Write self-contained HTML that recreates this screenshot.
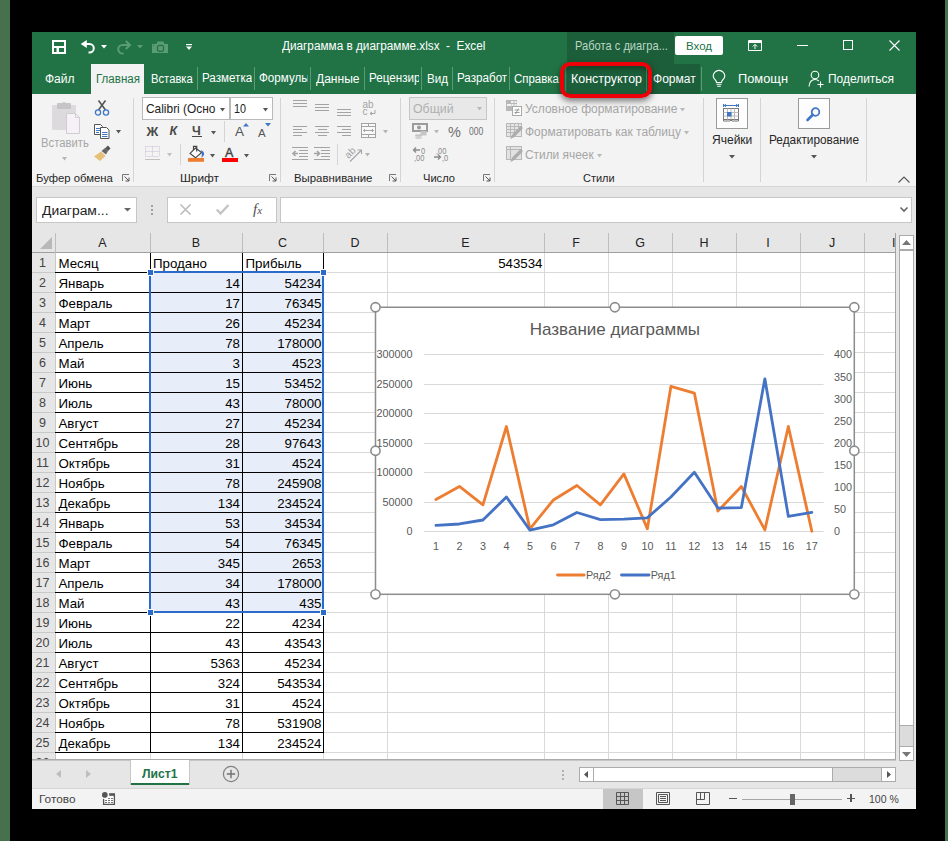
<!DOCTYPE html><html><head><meta charset="utf-8"><style>
html,body{margin:0;padding:0;}
body{width:948px;height:841px;background:#000;position:relative;overflow:hidden;font-family:"Liberation Sans",sans-serif;}
div{position:absolute;box-sizing:border-box;}
.t{white-space:nowrap;line-height:1;}
svg{position:absolute;overflow:visible;}
</style></head><body>
<div style="left:0px;top:0px;width:10px;height:841px;background:#47714d"></div>
<div style="left:945px;top:0px;width:3px;height:841px;background:#47714d"></div>
<div style="left:32px;top:32px;width:884px;height:777px;background:#e6e6e6"></div>
<div style="left:32px;top:32px;width:884px;height:62px;background:#217346"></div>
<svg style="left:52px;top:40px" width="14" height="14" viewBox="0 0 14 14">
<path d="M1 1h12v12H1z" fill="none" stroke="#fff" stroke-width="2"/>
<path d="M1 6h12v2H1z" fill="#fff"/>
<path d="M4.5 8h2.5v4H4.5z" fill="#fff"/>
</svg>
<svg style="left:80px;top:40px" width="16" height="14" viewBox="0 0 16 14">
<path d="M5 4h4.5a4.3 4.3 0 0 1 0 8.6h-1" fill="none" stroke="#fff" stroke-width="2"/>
<path d="M0.7 4L6.8 0v8z" fill="#fff"/>
</svg>
<svg style="left:101px;top:45px" width="6" height="4" viewBox="0 0 6 4"><path d="M0 0h6L3 3.5z" fill="#fff"/></svg>
<svg style="left:116px;top:40px" width="16" height="14" viewBox="0 0 16 14">
<path d="M13.5 5H6.5a4.3 4.3 0 0 0 0 8.6h1" fill="none" stroke="#5b9c76" stroke-width="2"/>
<path d="M9.8 1L14 5L9.8 9" fill="none" stroke="#5b9c76" stroke-width="2"/>
</svg>
<svg style="left:137px;top:45px" width="6" height="4" viewBox="0 0 6 4"><path d="M0 0h6L3 3.5z" fill="#5b9c76"/></svg>
<svg style="left:152px;top:41px" width="16" height="12" viewBox="0 0 16 12">
<path d="M0 3h4.5l1-2.5h6l1 2.5h3.5v9h-16z" fill="#5b9c76"/>
<rect x="5.5" y="4.3" width="6" height="6" rx="2" fill="none" stroke="#217346" stroke-width="1.3"/>
<circle cx="1.5" cy="4.5" r="0.6" fill="#217346"/>
</svg>
<svg style="left:186px;top:44px" width="6" height="7" viewBox="0 0 6 7"><path d="M0 0h6v1.2H0z" fill="#fff"/><path d="M0 2.5h6L3 6z" fill="#fff"/></svg>
<div class="t" style="left:282.40px;top:40.35px;font-size:12.21px;font-weight:normal;transform:scaleX(0.964);transform-origin:0 0;color:#fff">Диаграмма в диаграмме.xlsx&nbsp; -&nbsp; Excel</div>
<div style="left:567px;top:32px;width:107px;height:32px;background:#1b5e39"></div>
<div style="left:567px;top:64px;width:133px;height:30px;background:#1b5e39"></div>
<div class="t" style="left:574.70px;top:41.09px;font-size:11.92px;font-weight:normal;transform:scaleX(0.933);transform-origin:0 0;color:#bcd6c6">Работа с диагра...</div>
<div style="left:675px;top:36px;width:48px;height:19px;background:#fff;border-radius:2px"></div>
<div class="t" style="left:675px;top:41px;width:48px;text-align:center;color:#217346;font-size:11.5px">Вход</div>
<svg style="left:748px;top:40px" width="15" height="11" viewBox="0 0 15 11">
<path d="M0.5 0.5h13v10h-13z" fill="none" stroke="#fff" stroke-width="1"/>
<path d="M1 2h13" stroke="#fff" stroke-width="2"/>
<path d="M7 9V4.5M4.8 6.5L7 4.3L9.2 6.5" fill="none" stroke="#fff" stroke-width="1"/>
</svg>
<div style="left:797px;top:45px;width:11px;height:1px;background:#fff"></div>
<div style="left:843px;top:40px;width:10px;height:10px;border:1px solid #fff"></div>
<svg style="left:889px;top:40px" width="11" height="11" viewBox="0 0 11 11"><path d="M0.5 0.5L10.5 10.5M10.5 0.5L0.5 10.5" stroke="#fff" stroke-width="1.1"/></svg>
<div class="t" style="left:45.00px;top:72.58px;font-size:12.65px;font-weight:normal;transform:scaleX(0.949);transform-origin:0 0;color:#fff">Файл</div>
<div style="left:91px;top:64px;width:53px;height:30px;background:#f3f3f3"></div>
<div class="t" style="left:95.50px;top:72.58px;font-size:12.65px;font-weight:normal;transform:scaleX(0.914);transform-origin:0 0;color:#217346">Главная</div>
<div class="t" style="left:150.60px;top:72.58px;font-size:12.65px;font-weight:normal;transform:scaleX(0.889);transform-origin:0 0;color:#fff">Вставка</div>
<div style="left:197px;top:67px;width:1px;height:23px;background:#5c9a76"></div>
<div style="left:202.3px;top:64px;width:49.7px;height:30px;overflow:hidden"><div class="t" style="left:0;top:8.08px;font-size:12.65px;transform:scaleX(0.92);transform-origin:0 0;color:#fff">Разметка страницы</div></div>
<div style="left:254px;top:67px;width:1px;height:23px;background:#5c9a76"></div>
<div style="left:259.0px;top:64px;width:49.0px;height:30px;overflow:hidden"><div class="t" style="left:0;top:8.08px;font-size:12.65px;transform:scaleX(0.92);transform-origin:0 0;color:#fff">Формулы</div></div>
<div style="left:310px;top:67px;width:1px;height:23px;background:#5c9a76"></div>
<div class="t" style="left:316.00px;top:72.58px;font-size:12.65px;font-weight:normal;transform:scaleX(0.954);transform-origin:0 0;color:#fff">Данные</div>
<div style="left:364px;top:67px;width:1px;height:23px;background:#5c9a76"></div>
<div style="left:369.4px;top:64px;width:49.6px;height:30px;overflow:hidden"><div class="t" style="left:0;top:8.08px;font-size:12.65px;transform:scaleX(0.92);transform-origin:0 0;color:#fff">Рецензирование</div></div>
<div style="left:421px;top:67px;width:1px;height:23px;background:#5c9a76"></div>
<div class="t" style="left:427.00px;top:72.58px;font-size:12.65px;font-weight:normal;transform:scaleX(0.918);transform-origin:0 0;color:#fff">Вид</div>
<div style="left:452px;top:67px;width:1px;height:23px;background:#5c9a76"></div>
<div style="left:457.0px;top:64px;width:50.0px;height:30px;overflow:hidden"><div class="t" style="left:0;top:8.08px;font-size:12.65px;transform:scaleX(0.92);transform-origin:0 0;color:#fff">Разработчик</div></div>
<div style="left:509px;top:67px;width:1px;height:23px;background:#5c9a76"></div>
<div class="t" style="left:514.20px;top:72.58px;font-size:12.65px;font-weight:normal;transform:scaleX(0.907);transform-origin:0 0;color:#fff">Справка</div>
<div class="t" style="left:571.00px;top:72.58px;font-size:12.65px;font-weight:normal;transform:scaleX(0.985);transform-origin:0 0;color:#fff">Конструктор</div>
<div style="left:565px;top:67px;width:1px;height:24px;background:#4d8a66"></div>
<div style="left:646px;top:67px;width:1px;height:24px;background:#4d8a66"></div>
<div class="t" style="left:652.60px;top:72.58px;font-size:12.65px;font-weight:normal;transform:scaleX(0.953);transform-origin:0 0;color:#fff">Формат</div>
<div style="left:701px;top:67px;width:1px;height:24px;background:#5c9a76"></div>
<svg style="left:712px;top:71px" width="14" height="17" viewBox="0 0 14 17">
<path d="M4.5 11.5C4.5 9 1.2 7.8 1.2 5.2A5.8 5.8 0 0 1 12.8 5.2C12.8 7.8 9.5 9 9.5 11.5z" fill="none" stroke="#fff" stroke-width="1.1"/>
<path d="M4.5 13.3h5M5.2 15.2h3.6" stroke="#fff" stroke-width="1.1"/>
</svg>
<div class="t" style="left:738.00px;top:72.58px;font-size:12.65px;font-weight:normal;transform:scaleX(1.016);transform-origin:0 0;color:#fff">Помощн</div>
<svg style="left:808px;top:70px" width="17" height="18" viewBox="0 0 17 18">
<circle cx="7" cy="5" r="3.8" fill="none" stroke="#fff" stroke-width="1.1"/>
<path d="M1 16.5C1.5 12 4 9.5 7 9.5C8.5 9.5 9.8 10 10.8 11" fill="none" stroke="#fff" stroke-width="1.1"/>
<path d="M12.5 11.5v6M9.5 14.5h6" stroke="#fff" stroke-width="1.1"/>
</svg>
<div class="t" style="left:828.00px;top:72.58px;font-size:12.65px;font-weight:normal;transform:scaleX(0.945);transform-origin:0 0;color:#fff">Поделиться</div>
<div style="left:32px;top:94px;width:884px;height:92px;background:#f3f3f3"></div>
<div style="left:91px;top:94px;width:53px;height:1px;background:#f3f3f3"></div>
<div style="left:32px;top:186px;width:884px;height:1px;background:#d6d6d6"></div>
<svg style="left:52px;top:102px" width="29" height="30" viewBox="0 0 29 30">
<rect x="0" y="3" width="24" height="25" rx="1" fill="#dcdadc"/>
<rect x="5" y="1" width="14" height="6" rx="1" fill="#c6c4c6"/>
<circle cx="12" cy="1.8" r="1.8" fill="#c6c4c6"/>
<path d="M14.5 11.5h9l4 4v16h-13z" fill="#f6f1f6" stroke="#cfcdcf" stroke-width="1"/>
<path d="M23.5 11.5v4h4" fill="none" stroke="#cfcdcf" stroke-width="1"/>
</svg>
<div class="t" style="left:40.60px;top:136.80px;font-size:12.50px;font-weight:normal;transform:scaleX(0.902);transform-origin:0 0;color:#a6a6a6">Вставить</div>
<svg style="left:62px;top:157px" width="5" height="4" viewBox="0 0 5 4"><path d="M0 0h5L2.5 3.5z" fill="#b4b4b4"/></svg>
<svg style="left:94px;top:100px" width="16" height="16" viewBox="0 0 16 16">
<path d="M4.5 10L11.5 0.5M11.5 10L4.5 0.5" stroke="#555" stroke-width="1.6"/>
<circle cx="4" cy="12.5" r="2.6" fill="none" stroke="#3f77c6" stroke-width="1.3"/>
<circle cx="12" cy="12.5" r="2.6" fill="none" stroke="#3f77c6" stroke-width="1.3"/>
</svg>
<svg style="left:94px;top:124px" width="16" height="15" viewBox="0 0 16 15">
<path d="M0.5 0.5h6l2 2v8h-8z" fill="#fff" stroke="#555" stroke-width="1"/>
<path d="M2 4.5h4M2 6.5h4M2 8.5h3" stroke="#3f77c6" stroke-width="1"/>
<path d="M6.5 3.5h6l2.5 2.5v8.5h-8.5z" fill="#fff" stroke="#555" stroke-width="1"/>
<path d="M8 8.5h5.5M8 10.5h5.5M8 12.5h5.5" stroke="#3f77c6" stroke-width="1"/>
</svg>
<svg style="left:116px;top:130px" width="5" height="4" viewBox="0 0 5 4"><path d="M0 0h5L2.5 3.5z" fill="#555"/></svg>
<svg style="left:94px;top:146px" width="17" height="15" viewBox="0 0 17 15">
<path d="M0 10.5L7 5.5L11.5 10L6 15z" fill="#e6bf78"/>
<path d="M7.5 5L11 2L14 5L12 8.5z" fill="#666"/>
<path d="M11 2.2L14 -0.5L16.5 2.5L14 5z" fill="#555"/>
</svg>
<div class="t" style="left:35.60px;top:172.69px;font-size:11.34px;font-weight:normal;transform:scaleX(0.997);transform-origin:0 0;color:#262626">Буфер обмена</div>
<svg style="left:122px;top:174px" width="8" height="8" viewBox="0 0 8 8">
<path d="M0.5 7V0.5H7" fill="none" stroke="#777" stroke-width="1"/>
<path d="M2.5 2.5L7 7M7 3.5V7H3.5" fill="none" stroke="#555" stroke-width="1"/></svg>
<div style="left:133px;top:98px;width:1px;height:84px;background:#d4d4d4"></div>
<div style="left:142px;top:97px;width:88px;height:23px;background:#fff;border:1px solid #b9b9b9"></div>
<div style="left:230px;top:97px;width:43px;height:23px;background:#fff;border:1px solid #b9b9b9"></div>
<div class="t" style="left:145.50px;top:102.72px;font-size:12.35px;font-weight:normal;transform:scaleX(0.965);transform-origin:0 0;color:#222">Calibri (Осно</div>
<svg style="left:220px;top:108px" width="5" height="4" viewBox="0 0 5 4"><path d="M0 0h5L2.5 3.5z" fill="#555"/></svg>
<div class="t" style="left:233.80px;top:102.72px;font-size:12.35px;font-weight:normal;transform:scaleX(0.873);transform-origin:0 0;color:#222">10</div>
<svg style="left:263px;top:108px" width="5" height="4" viewBox="0 0 5 4"><path d="M0 0h5L2.5 3.5z" fill="#555"/></svg>
<div class="t" style="left:146.5px;top:124.5px;color:#4a4a4a;font-size:13px;font-weight:bold">Ж</div>
<div class="t" style="left:169.5px;top:125px;color:#4a4a4a;font-size:12.5px;font-weight:bold;font-style:italic">К</div>
<div class="t" style="left:192px;top:125px;color:#4a4a4a;font-size:12.5px;font-weight:bold">Ч</div>
<div style="left:192px;top:136px;width:10px;height:1px;background:#4a4a4a"></div>
<svg style="left:211px;top:131px" width="5" height="4" viewBox="0 0 5 4"><path d="M0 0h5L2.5 3.5z" fill="#555"/></svg>
<div style="left:224px;top:121px;width:1px;height:21px;background:#d4d4d4"></div>
<div class="t" style="left:235px;top:125px;color:#555;font-size:13.5px">A</div>
<svg style="left:243px;top:123px" width="6" height="4" viewBox="0 0 6 4"><path d="M0 3.5h6L3 0z" fill="#3f77c6"/></svg>
<div class="t" style="left:258px;top:127.5px;color:#555;font-size:11.5px">A</div>
<svg style="left:265px;top:123px" width="6" height="4" viewBox="0 0 6 4"><path d="M0 0h6L3 3.5z" fill="#3f77c6"/></svg>
<svg style="left:145px;top:146px" width="15" height="14" viewBox="0 0 15 14">
<path d="M0.5 0.5h14M0.5 5.5h14M0.5 10.5h14M0.5 0.5v10M7.5 0.5v10M14.5 0.5v10" fill="none" stroke="#c8bed2" stroke-width="1" stroke-dasharray="1 1"/>
<path d="M0 13.5h15" stroke="#c0c0c0" stroke-width="1"/>
</svg>
<svg style="left:167px;top:153px" width="5" height="4" viewBox="0 0 5 4"><path d="M0 0h5L2.5 3.5z" fill="#c0c0c0"/></svg>
<div style="left:180px;top:144px;width:1px;height:21px;background:#d4d4d4"></div>
<svg style="left:185px;top:143px" width="22" height="20" viewBox="0 0 22 20">
<path d="M5.1 10.4L10.5 5L16.6 9.5L10.5 14.8z" fill="#fff" stroke="#444" stroke-width="1.1"/>
<path d="M8.5 7V3.3h3.2v5.2" fill="none" stroke="#444" stroke-width="1.2"/>
<path d="M15.8 7.2C18.5 7.8 19.8 10 18.8 12.3L16.6 15L16.8 9.8z" fill="#3f77c6"/>
<path d="M3 15h16v3.8H3z" fill="#ed7d31"/>
</svg>
<svg style="left:210px;top:154px" width="5" height="4" viewBox="0 0 5 4"><path d="M0 0h5L2.5 3.5z" fill="#555"/></svg>
<div class="t" style="left:225px;top:146.5px;color:#444;font-size:12.5px;-webkit-text-stroke:0.4px #444">A</div>
<div style="left:222px;top:158px;width:16px;height:4px;background:#ff0000"></div>
<svg style="left:244px;top:154px" width="5" height="4" viewBox="0 0 5 4"><path d="M0 0h5L2.5 3.5z" fill="#555"/></svg>
<svg style="left:269px;top:174px" width="8" height="8" viewBox="0 0 8 8">
<path d="M0.5 7V0.5H7" fill="none" stroke="#777" stroke-width="1"/>
<path d="M2.5 2.5L7 7M7 3.5V7H3.5" fill="none" stroke="#555" stroke-width="1"/></svg>
<div class="t" style="left:179.70px;top:172.69px;font-size:11.34px;font-weight:normal;transform:scaleX(1.046);transform-origin:0 0;color:#262626">Шрифт</div>
<div style="left:280px;top:98px;width:1px;height:84px;background:#d4d4d4"></div>
<div style="left:293px;top:100px;width:14px;height:1px;background:#a3a3a3"></div>
<div style="left:293px;top:103px;width:14px;height:1px;background:#a3a3a3"></div>
<div style="left:293px;top:106px;width:14px;height:1px;background:#a3a3a3"></div>
<div style="left:315px;top:104px;width:14px;height:1px;background:#a3a3a3"></div>
<div style="left:315px;top:107px;width:14px;height:1px;background:#a3a3a3"></div>
<div style="left:315px;top:110px;width:14px;height:1px;background:#a3a3a3"></div>
<div style="left:337px;top:109px;width:14px;height:1px;background:#a3a3a3"></div>
<div style="left:337px;top:112px;width:14px;height:1px;background:#a3a3a3"></div>
<div style="left:337px;top:115px;width:14px;height:1px;background:#a3a3a3"></div>
<div class="t" style="left:362.5px;top:99.5px;color:#a3a3a3;font-size:10px">ab</div>
<div class="t" style="left:362.5px;top:107.3px;color:#a3a3a3;font-size:10px">c</div>
<svg style="left:369px;top:110px" width="7" height="6" viewBox="0 0 7 6"><path d="M6 0v3.5H1.5M3 2L1 3.5L3 5" fill="none" stroke="#a3a3a3" stroke-width="1"/></svg>
<div style="left:293px;top:126px;width:14px;height:1px;background:#a3a3a3"></div>
<div style="left:293px;top:129px;width:9px;height:1px;background:#a3a3a3"></div>
<div style="left:293px;top:132px;width:14px;height:1px;background:#a3a3a3"></div>
<div style="left:293px;top:135px;width:9px;height:1px;background:#a3a3a3"></div>
<div style="left:315px;top:126px;width:14px;height:1px;background:#a3a3a3"></div>
<div style="left:317.5px;top:129px;width:9px;height:1px;background:#a3a3a3"></div>
<div style="left:315px;top:132px;width:14px;height:1px;background:#a3a3a3"></div>
<div style="left:317.5px;top:135px;width:9px;height:1px;background:#a3a3a3"></div>
<div style="left:337px;top:126px;width:14px;height:1px;background:#a3a3a3"></div>
<div style="left:342px;top:129px;width:9px;height:1px;background:#a3a3a3"></div>
<div style="left:337px;top:132px;width:14px;height:1px;background:#a3a3a3"></div>
<div style="left:342px;top:135px;width:9px;height:1px;background:#a3a3a3"></div>
<svg style="left:361px;top:123px" width="15" height="15" viewBox="0 0 15 15">
<rect x="0.5" y="0.5" width="14" height="14" fill="#fbf8fb" stroke="#a3a3a3"/>
<path d="M0.5 3.5h14M0.5 11.5h14M7.5 0.5v3M7.5 11.5v3" stroke="#a3a3a3"/>
<path d="M2.5 7.5h10M4 6L2.5 7.5L4 9M11 6L12.5 7.5L11 9" fill="none" stroke="#a3a3a3"/>
</svg>
<svg style="left:383px;top:130px" width="5" height="4" viewBox="0 0 5 4"><path d="M0 0h5L2.5 3.5z" fill="#b4b4b4"/></svg>
<svg style="left:292px;top:147px" width="17" height="13" viewBox="0 0 17 13">
<path d="M0 0.5h16M7 3.5h9M7 6.5h9M7 9.5h9M0 12.5h16" stroke="#a3a3a3"/>
<path d="M1 6.5h5M3.5 4L1 6.5L3.5 9" fill="none" stroke="#a3a3a3" stroke-width="1.6"/>
</svg>
<svg style="left:314px;top:147px" width="17" height="13" viewBox="0 0 17 13">
<path d="M0 0.5h16M7 3.5h9M7 6.5h9M7 9.5h9M0 12.5h16" stroke="#a3a3a3"/>
<path d="M0 6.5h5M3 4L5.5 6.5L3 9" fill="none" stroke="#a3a3a3" stroke-width="1.6"/>
</svg>
<div style="left:337px;top:144px;width:1px;height:21px;background:#d4d4d4"></div>
<svg style="left:345px;top:146px" width="18" height="16" viewBox="0 0 18 16">
<text x="0" y="0" transform="translate(3.5 13) rotate(-45)" font-family="Liberation Sans" font-size="10" fill="#a3a3a3">ab</text>
<path d="M5 15.5L16 4.5" stroke="#a3a3a3" stroke-width="1.1"/>
<path d="M12.5 4H16.5V8" fill="none" stroke="#a3a3a3" stroke-width="1.1"/>
</svg>
<svg style="left:365px;top:153px" width="5" height="4" viewBox="0 0 5 4"><path d="M0 0h5L2.5 3.5z" fill="#b4b4b4"/></svg>
<div class="t" style="left:293.50px;top:172.69px;font-size:11.34px;font-weight:normal;transform:scaleX(1.005);transform-origin:0 0;color:#262626">Выравнивание</div>
<svg style="left:389px;top:174px" width="8" height="8" viewBox="0 0 8 8">
<path d="M0.5 7V0.5H7" fill="none" stroke="#777" stroke-width="1"/>
<path d="M2.5 2.5L7 7M7 3.5V7H3.5" fill="none" stroke="#555" stroke-width="1"/></svg>
<div style="left:400px;top:98px;width:1px;height:84px;background:#d4d4d4"></div>
<div style="left:409px;top:97px;width:78px;height:23px;background:#e8e8e8;border:1px solid #c6c6c6"></div>
<div class="t" style="left:412.60px;top:102.41px;font-size:13.08px;font-weight:normal;transform:scaleX(0.943);transform-origin:0 0;color:#b0b0b0">Общий</div>
<svg style="left:477px;top:107px" width="5" height="4" viewBox="0 0 5 4"><path d="M0 0h5L2.5 3.5z" fill="#b8b8b8"/></svg>
<svg style="left:412px;top:123px" width="17" height="16" viewBox="0 0 17 16">
<path d="M0 0h16v9H0z" fill="#9c9c9c"/><path d="M2 2h12v5H2z" fill="#f6f2f6"/>
<circle cx="7" cy="4.5" r="2" fill="#9c9c9c"/>
<ellipse cx="11.5" cy="9" rx="3.5" ry="1.3" fill="#c4c4c4"/>
<ellipse cx="11.5" cy="11.3" rx="3.5" ry="1.3" fill="#c4c4c4"/>
<ellipse cx="6.5" cy="12.5" rx="3.5" ry="1.3" fill="#c4c4c4"/>
<ellipse cx="6.5" cy="14.8" rx="3.5" ry="1.2" fill="#d4d4d4"/>
</svg>
<svg style="left:434px;top:130px" width="5" height="4" viewBox="0 0 5 4"><path d="M0 0h5L2.5 3.5z" fill="#b8b8b8"/></svg>
<div class="t" style="left:448px;top:125px;color:#707070;font-size:14.5px">%</div>
<div class="t" style="left:468.5px;top:126px;color:#707070;font-size:10.5px;transform:scaleX(0.82);transform-origin:0 0">000</div>
<div class="t" style="left:421px;top:146.5px;color:#8a8a8a;font-size:8.8px;transform:scaleX(.85);transform-origin:0 0">0</div>
<div class="t" style="left:413.5px;top:153.5px;color:#8a8a8a;font-size:8.8px;transform:scaleX(.85);transform-origin:0 0">,00</div>
<svg style="left:412px;top:147px" width="8" height="6" viewBox="0 0 8 6"><path d="M8 3H1.5M4 0.5L1.5 3L4 5.5" fill="none" stroke="#8a8a8a" stroke-width="1.3"/></svg>
<div class="t" style="left:436px;top:146.5px;color:#8a8a8a;font-size:8.8px;transform:scaleX(.85);transform-origin:0 0">,00</div>
<div class="t" style="left:441.5px;top:153.5px;color:#8a8a8a;font-size:8.8px;transform:scaleX(.85);transform-origin:0 0">,0</div>
<svg style="left:434px;top:154px" width="8" height="6" viewBox="0 0 8 6"><path d="M0 3h6.5M4 0.5L6.5 3L4 5.5" fill="none" stroke="#8a8a8a" stroke-width="1.3"/></svg>
<div class="t" style="left:423.40px;top:172.69px;font-size:11.34px;font-weight:normal;transform:scaleX(0.981);transform-origin:0 0;color:#262626">Число</div>
<svg style="left:483px;top:174px" width="8" height="8" viewBox="0 0 8 8">
<path d="M0.5 7V0.5H7" fill="none" stroke="#777" stroke-width="1"/>
<path d="M2.5 2.5L7 7M7 3.5V7H3.5" fill="none" stroke="#555" stroke-width="1"/></svg>
<div style="left:494px;top:98px;width:1px;height:84px;background:#d4d4d4"></div>
<svg style="left:506px;top:100px" width="16" height="16" viewBox="0 0 16 16">
<path d="M0 0h11v11H0z" fill="#b8b8b8"/>
<path d="M5 1h2.5v2H5zM8.5 1h2v2h-2zM1 4h4v2H1zM5.5 4h2v2h-2zM8.5 4h2v2h-2z" fill="#f3f3f3"/>
<rect x="6.5" y="6.5" width="9" height="9" fill="#fff" stroke="#a8a8a8"/>
<path d="M8.5 10h5M8.5 12.5h5M12.5 8.5L9.5 14" stroke="#999" stroke-width="1"/>
</svg>
<svg style="left:506px;top:123px" width="16" height="16" viewBox="0 0 16 16">
<rect x="0.5" y="0.5" width="15" height="13" fill="#e6e6e6" stroke="#b8b8b8"/>
<path d="M0.5 3.5h15M0.5 6.5h12M0.5 9.5h9M4.5 0.5v13M8.5 0.5v9M12.5 0.5v5" stroke="#b8b8b8"/>
<path d="M15 5L8.5 11.5" stroke="#adadad" stroke-width="3.2" stroke-linecap="round"/><path d="M8.5 10.5C6 10.5 5.5 13 4 16C7 15 9.5 14 9.5 11.5z" fill="#adadad"/>
</svg>
<svg style="left:506px;top:146px" width="16" height="16" viewBox="0 0 16 16">
<rect x="0.5" y="0.5" width="15" height="13" fill="#e2e2e2" stroke="#b8b8b8"/>
<path d="M0.5 3.5h15M4.5 0.5v13" stroke="#b8b8b8"/>
<path d="M15 5L8.5 11.5" stroke="#adadad" stroke-width="3.2" stroke-linecap="round"/><path d="M8.5 10.5C6 10.5 5.5 13 4 16C7 15 9.5 14 9.5 11.5z" fill="#adadad"/>
</svg>
<div class="t" style="left:525.30px;top:102.55px;font-size:12.21px;font-weight:normal;transform:scaleX(0.981);transform-origin:0 0;color:#a6a6a6">Условное форматирование</div>
<svg style="left:680px;top:108px" width="5" height="4" viewBox="0 0 5 4"><path d="M0 0h5L2.5 3.5z" fill="#b8b8b8"/></svg>
<div class="t" style="left:525.30px;top:125.75px;font-size:12.21px;font-weight:normal;transform:scaleX(0.982);transform-origin:0 0;color:#a6a6a6">Форматировать как таблицу</div>
<svg style="left:684px;top:131px" width="5" height="4" viewBox="0 0 5 4"><path d="M0 0h5L2.5 3.5z" fill="#b8b8b8"/></svg>
<div class="t" style="left:525.30px;top:148.75px;font-size:12.21px;font-weight:normal;transform:scaleX(0.974);transform-origin:0 0;color:#a6a6a6">Стили ячеек</div>
<svg style="left:597px;top:154px" width="5" height="4" viewBox="0 0 5 4"><path d="M0 0h5L2.5 3.5z" fill="#b8b8b8"/></svg>
<div class="t" style="left:583.40px;top:172.69px;font-size:11.34px;font-weight:normal;transform:scaleX(0.967);transform-origin:0 0;color:#262626">Стили</div>
<div style="left:703px;top:98px;width:1px;height:84px;background:#d4d4d4"></div>
<div style="left:716px;top:98px;width:32px;height:31px;background:#fdfdfd;border:1px solid #9a9a9a"></div>
<svg style="left:723px;top:104px" width="17" height="18" viewBox="0 0 17 18">
<path d="M0.5 0v3M15.5 0v3M1 1.5h14M3 0.3L1.2 1.5L3 2.7M13 0.3L14.8 1.5L13 2.7" fill="none" stroke="#3f77c6" stroke-width="1"/>
<rect x="0.5" y="4.5" width="15" height="11" fill="#fff" stroke="#777"/>
<path d="M0.5 8.5h15M0.5 12h15M4.5 4.5v11M8 4.5v11M11.5 4.5v11" stroke="#bbb"/>
<rect x="4" y="8" width="4.5" height="4.5" fill="#3f77c6"/>
<path d="M0.5 15.5v1.5h6.5l1-1l1 1h6.5v-1.5" fill="none" stroke="#777"/>
</svg>
<div class="t" style="left:712.00px;top:134.43px;font-size:12.94px;font-weight:normal;transform:scaleX(0.929);transform-origin:0 0;color:#262626">Ячейки</div>
<svg style="left:729px;top:155px" width="6" height="4" viewBox="0 0 6 4"><path d="M0 0h6L3.0 3.5z" fill="#555"/></svg>
<div style="left:760px;top:98px;width:1px;height:84px;background:#d4d4d4"></div>
<div style="left:798px;top:98px;width:32px;height:31px;background:#fdfdfd;border:1px solid #9a9a9a"></div>
<svg style="left:806px;top:106px" width="16" height="16" viewBox="0 0 16 16">
<circle cx="9.5" cy="6" r="3.8" fill="none" stroke="#3f77c6" stroke-width="1.8"/>
<path d="M6.8 8.8L1.5 14" stroke="#3f77c6" stroke-width="2.6" stroke-linecap="round"/>
</svg>
<div class="t" style="left:769.30px;top:134.43px;font-size:12.94px;font-weight:normal;transform:scaleX(0.913);transform-origin:0 0;color:#262626">Редактирование</div>
<svg style="left:811px;top:155px" width="6" height="4" viewBox="0 0 6 4"><path d="M0 0h6L3.0 3.5z" fill="#555"/></svg>
<div style="left:866px;top:98px;width:1px;height:84px;background:#d4d4d4"></div>
<svg style="left:898px;top:176px" width="12" height="7" viewBox="0 0 12 7"><path d="M0.5 6.5L6 1L11.5 6.5" fill="none" stroke="#555" stroke-width="1.1"/></svg>
<div style="left:36px;top:197px;width:101px;height:26px;background:#fff;border:1px solid #c6c6c6"></div>
<div class="t" style="left:42.20px;top:204.78px;font-size:12.65px;font-weight:normal;transform:scaleX(1.098);transform-origin:0 0;color:#222">Диаграм...</div>
<svg style="left:124px;top:208px" width="7" height="4" viewBox="0 0 7 4"><path d="M0 0h7L3.5 3.5z" fill="#666"/></svg>
<div style="left:151px;top:205px;width:2px;height:1.5px;background:#a0a0a0"></div>
<div style="left:151px;top:209px;width:2px;height:1.5px;background:#a0a0a0"></div>
<div style="left:151px;top:213px;width:2px;height:1.5px;background:#a0a0a0"></div>
<div style="left:167px;top:197px;width:110px;height:26px;background:#fff;border:1px solid #c6c6c6"></div>
<svg style="left:180px;top:204px" width="11" height="11" viewBox="0 0 11 11"><path d="M0.5 0.5L10.5 10.5M10.5 0.5L0.5 10.5" stroke="#bdbdbd" stroke-width="1.7"/></svg>
<svg style="left:216px;top:204px" width="13" height="11" viewBox="0 0 13 11"><path d="M0.8 5.5L4.5 9.5L12.5 1" fill="none" stroke="#c4c4c4" stroke-width="2.4"/></svg>
<div class="t" style="left:253px;top:202px;color:#505050;font-size:15px;font-family:'Liberation Serif',serif"><i>f</i><span style='font-size:11px'><i>x</i></span></div>
<div style="left:280px;top:197px;width:632px;height:26px;background:#fff;border:1px solid #c6c6c6"></div>
<svg style="left:900px;top:207px" width="8" height="5" viewBox="0 0 8 5"><path d="M0.5 0.5L4 4L7.5 0.5" fill="none" stroke="#666" stroke-width="1.6"/></svg>
<div style="left:32px;top:233px;width:864px;height:20px;background:#e6e6e6"></div>
<div style="left:32px;top:252px;width:864px;height:1px;background:#9f9f9f"></div>
<svg style="left:40px;top:237px" width="12" height="12" viewBox="0 0 12 12"><path d="M12 0V12H0z" fill="#b8b8b8"/></svg>
<div style="left:55px;top:233px;width:1px;height:20px;background:#bdbdbd"></div>
<div style="left:150px;top:233px;width:1px;height:19px;background:#bdbdbd"></div>
<div class="t" style="left:55px;top:237px;width:95px;text-align:center;color:#222;font-size:12.5px">A</div>
<div style="left:242px;top:233px;width:1px;height:19px;background:#bdbdbd"></div>
<div class="t" style="left:150px;top:237px;width:92px;text-align:center;color:#222;font-size:12.5px">B</div>
<div style="left:323px;top:233px;width:1px;height:19px;background:#bdbdbd"></div>
<div class="t" style="left:242px;top:237px;width:81px;text-align:center;color:#222;font-size:12.5px">C</div>
<div style="left:387px;top:233px;width:1px;height:19px;background:#bdbdbd"></div>
<div class="t" style="left:323px;top:237px;width:64px;text-align:center;color:#222;font-size:12.5px">D</div>
<div style="left:544px;top:233px;width:1px;height:19px;background:#bdbdbd"></div>
<div class="t" style="left:387px;top:237px;width:157px;text-align:center;color:#222;font-size:12.5px">E</div>
<div style="left:608px;top:233px;width:1px;height:19px;background:#bdbdbd"></div>
<div class="t" style="left:544px;top:237px;width:64px;text-align:center;color:#222;font-size:12.5px">F</div>
<div style="left:672px;top:233px;width:1px;height:19px;background:#bdbdbd"></div>
<div class="t" style="left:608px;top:237px;width:64px;text-align:center;color:#222;font-size:12.5px">G</div>
<div style="left:736px;top:233px;width:1px;height:19px;background:#bdbdbd"></div>
<div class="t" style="left:672px;top:237px;width:64px;text-align:center;color:#222;font-size:12.5px">H</div>
<div style="left:800px;top:233px;width:1px;height:19px;background:#bdbdbd"></div>
<div class="t" style="left:736px;top:237px;width:64px;text-align:center;color:#222;font-size:12.5px">I</div>
<div style="left:864px;top:233px;width:1px;height:19px;background:#bdbdbd"></div>
<div class="t" style="left:800px;top:237px;width:64px;text-align:center;color:#222;font-size:12.5px">J</div>
<div class="t" style="left:892px;top:237px;color:#222;font-size:12.5px">I</div>
<div style="left:32px;top:253px;width:23px;height:507px;background:#e6e6e6"></div>
<div style="left:55px;top:253px;width:841px;height:507px;background:#fff"></div>
<div style="left:32px;top:272px;width:23px;height:1px;background:#c8c8c8"></div>
<div style="left:56px;top:272px;width:840px;height:1px;background:#d9d9d9"></div>
<div style="left:32px;top:292px;width:23px;height:1px;background:#c8c8c8"></div>
<div style="left:56px;top:292px;width:840px;height:1px;background:#d9d9d9"></div>
<div style="left:32px;top:312px;width:23px;height:1px;background:#c8c8c8"></div>
<div style="left:56px;top:312px;width:840px;height:1px;background:#d9d9d9"></div>
<div style="left:32px;top:332px;width:23px;height:1px;background:#c8c8c8"></div>
<div style="left:56px;top:332px;width:840px;height:1px;background:#d9d9d9"></div>
<div style="left:32px;top:352px;width:23px;height:1px;background:#c8c8c8"></div>
<div style="left:56px;top:352px;width:840px;height:1px;background:#d9d9d9"></div>
<div style="left:32px;top:372px;width:23px;height:1px;background:#c8c8c8"></div>
<div style="left:56px;top:372px;width:840px;height:1px;background:#d9d9d9"></div>
<div style="left:32px;top:392px;width:23px;height:1px;background:#c8c8c8"></div>
<div style="left:56px;top:392px;width:840px;height:1px;background:#d9d9d9"></div>
<div style="left:32px;top:412px;width:23px;height:1px;background:#c8c8c8"></div>
<div style="left:56px;top:412px;width:840px;height:1px;background:#d9d9d9"></div>
<div style="left:32px;top:432px;width:23px;height:1px;background:#c8c8c8"></div>
<div style="left:56px;top:432px;width:840px;height:1px;background:#d9d9d9"></div>
<div style="left:32px;top:452px;width:23px;height:1px;background:#c8c8c8"></div>
<div style="left:56px;top:452px;width:840px;height:1px;background:#d9d9d9"></div>
<div style="left:32px;top:472px;width:23px;height:1px;background:#c8c8c8"></div>
<div style="left:56px;top:472px;width:840px;height:1px;background:#d9d9d9"></div>
<div style="left:32px;top:492px;width:23px;height:1px;background:#c8c8c8"></div>
<div style="left:56px;top:492px;width:840px;height:1px;background:#d9d9d9"></div>
<div style="left:32px;top:512px;width:23px;height:1px;background:#c8c8c8"></div>
<div style="left:56px;top:512px;width:840px;height:1px;background:#d9d9d9"></div>
<div style="left:32px;top:532px;width:23px;height:1px;background:#c8c8c8"></div>
<div style="left:56px;top:532px;width:840px;height:1px;background:#d9d9d9"></div>
<div style="left:32px;top:552px;width:23px;height:1px;background:#c8c8c8"></div>
<div style="left:56px;top:552px;width:840px;height:1px;background:#d9d9d9"></div>
<div style="left:32px;top:572px;width:23px;height:1px;background:#c8c8c8"></div>
<div style="left:56px;top:572px;width:840px;height:1px;background:#d9d9d9"></div>
<div style="left:32px;top:592px;width:23px;height:1px;background:#c8c8c8"></div>
<div style="left:56px;top:592px;width:840px;height:1px;background:#d9d9d9"></div>
<div style="left:32px;top:612px;width:23px;height:1px;background:#c8c8c8"></div>
<div style="left:56px;top:612px;width:840px;height:1px;background:#d9d9d9"></div>
<div style="left:32px;top:632px;width:23px;height:1px;background:#c8c8c8"></div>
<div style="left:56px;top:632px;width:840px;height:1px;background:#d9d9d9"></div>
<div style="left:32px;top:652px;width:23px;height:1px;background:#c8c8c8"></div>
<div style="left:56px;top:652px;width:840px;height:1px;background:#d9d9d9"></div>
<div style="left:32px;top:672px;width:23px;height:1px;background:#c8c8c8"></div>
<div style="left:56px;top:672px;width:840px;height:1px;background:#d9d9d9"></div>
<div style="left:32px;top:692px;width:23px;height:1px;background:#c8c8c8"></div>
<div style="left:56px;top:692px;width:840px;height:1px;background:#d9d9d9"></div>
<div style="left:32px;top:712px;width:23px;height:1px;background:#c8c8c8"></div>
<div style="left:56px;top:712px;width:840px;height:1px;background:#d9d9d9"></div>
<div style="left:32px;top:732px;width:23px;height:1px;background:#c8c8c8"></div>
<div style="left:56px;top:732px;width:840px;height:1px;background:#d9d9d9"></div>
<div style="left:32px;top:752px;width:23px;height:1px;background:#c8c8c8"></div>
<div style="left:56px;top:752px;width:840px;height:1px;background:#d9d9d9"></div>
<div style="left:32px;top:772px;width:23px;height:1px;background:#c8c8c8"></div>
<div style="left:56px;top:772px;width:840px;height:1px;background:#d9d9d9"></div>
<div style="left:150px;top:253px;width:1px;height:507px;background:#d9d9d9"></div>
<div style="left:242px;top:253px;width:1px;height:507px;background:#d9d9d9"></div>
<div style="left:323px;top:253px;width:1px;height:507px;background:#d9d9d9"></div>
<div style="left:387px;top:253px;width:1px;height:507px;background:#d9d9d9"></div>
<div style="left:544px;top:253px;width:1px;height:507px;background:#d9d9d9"></div>
<div style="left:608px;top:253px;width:1px;height:507px;background:#d9d9d9"></div>
<div style="left:672px;top:253px;width:1px;height:507px;background:#d9d9d9"></div>
<div style="left:736px;top:253px;width:1px;height:507px;background:#d9d9d9"></div>
<div style="left:800px;top:253px;width:1px;height:507px;background:#d9d9d9"></div>
<div style="left:864px;top:253px;width:1px;height:507px;background:#d9d9d9"></div>
<div style="left:55px;top:253px;width:1px;height:507px;background:#c8c8c8"></div>
<div class="t" style="left:32px;top:257px;width:21px;text-align:center;color:#444;font-size:12.5px">1</div>
<div class="t" style="left:32px;top:277px;width:21px;text-align:center;color:#444;font-size:12.5px">2</div>
<div class="t" style="left:32px;top:297px;width:21px;text-align:center;color:#444;font-size:12.5px">3</div>
<div class="t" style="left:32px;top:317px;width:21px;text-align:center;color:#444;font-size:12.5px">4</div>
<div class="t" style="left:32px;top:337px;width:21px;text-align:center;color:#444;font-size:12.5px">5</div>
<div class="t" style="left:32px;top:357px;width:21px;text-align:center;color:#444;font-size:12.5px">6</div>
<div class="t" style="left:32px;top:377px;width:21px;text-align:center;color:#444;font-size:12.5px">7</div>
<div class="t" style="left:32px;top:397px;width:21px;text-align:center;color:#444;font-size:12.5px">8</div>
<div class="t" style="left:32px;top:417px;width:21px;text-align:center;color:#444;font-size:12.5px">9</div>
<div class="t" style="left:32px;top:437px;width:21px;text-align:center;color:#444;font-size:12.5px">10</div>
<div class="t" style="left:32px;top:457px;width:21px;text-align:center;color:#444;font-size:12.5px">11</div>
<div class="t" style="left:32px;top:477px;width:21px;text-align:center;color:#444;font-size:12.5px">12</div>
<div class="t" style="left:32px;top:497px;width:21px;text-align:center;color:#444;font-size:12.5px">13</div>
<div class="t" style="left:32px;top:517px;width:21px;text-align:center;color:#444;font-size:12.5px">14</div>
<div class="t" style="left:32px;top:537px;width:21px;text-align:center;color:#444;font-size:12.5px">15</div>
<div class="t" style="left:32px;top:557px;width:21px;text-align:center;color:#444;font-size:12.5px">16</div>
<div class="t" style="left:32px;top:577px;width:21px;text-align:center;color:#444;font-size:12.5px">17</div>
<div class="t" style="left:32px;top:597px;width:21px;text-align:center;color:#444;font-size:12.5px">18</div>
<div class="t" style="left:32px;top:617px;width:21px;text-align:center;color:#444;font-size:12.5px">19</div>
<div class="t" style="left:32px;top:637px;width:21px;text-align:center;color:#444;font-size:12.5px">20</div>
<div class="t" style="left:32px;top:657px;width:21px;text-align:center;color:#444;font-size:12.5px">21</div>
<div class="t" style="left:32px;top:677px;width:21px;text-align:center;color:#444;font-size:12.5px">22</div>
<div class="t" style="left:32px;top:697px;width:21px;text-align:center;color:#444;font-size:12.5px">23</div>
<div class="t" style="left:32px;top:717px;width:21px;text-align:center;color:#444;font-size:12.5px">24</div>
<div class="t" style="left:32px;top:737px;width:21px;text-align:center;color:#444;font-size:12.5px">25</div>
<div class="t" style="left:32px;top:757px;width:21px;text-align:center;color:#444;font-size:12.5px">26</div>
<div style="left:151px;top:273px;width:172px;height:340px;background:#e7eef9"></div>
<div style="left:55px;top:272px;width:269px;height:1px;background:#000"></div>
<div style="left:55px;top:292px;width:269px;height:1px;background:#000"></div>
<div style="left:55px;top:312px;width:269px;height:1px;background:#000"></div>
<div style="left:55px;top:332px;width:269px;height:1px;background:#000"></div>
<div style="left:55px;top:352px;width:269px;height:1px;background:#000"></div>
<div style="left:55px;top:372px;width:269px;height:1px;background:#000"></div>
<div style="left:55px;top:392px;width:269px;height:1px;background:#000"></div>
<div style="left:55px;top:412px;width:269px;height:1px;background:#000"></div>
<div style="left:55px;top:432px;width:269px;height:1px;background:#000"></div>
<div style="left:55px;top:452px;width:269px;height:1px;background:#000"></div>
<div style="left:55px;top:472px;width:269px;height:1px;background:#000"></div>
<div style="left:55px;top:492px;width:269px;height:1px;background:#000"></div>
<div style="left:55px;top:512px;width:269px;height:1px;background:#000"></div>
<div style="left:55px;top:532px;width:269px;height:1px;background:#000"></div>
<div style="left:55px;top:552px;width:269px;height:1px;background:#000"></div>
<div style="left:55px;top:572px;width:269px;height:1px;background:#000"></div>
<div style="left:55px;top:592px;width:269px;height:1px;background:#000"></div>
<div style="left:55px;top:612px;width:269px;height:1px;background:#000"></div>
<div style="left:55px;top:632px;width:269px;height:1px;background:#000"></div>
<div style="left:55px;top:652px;width:269px;height:1px;background:#000"></div>
<div style="left:55px;top:672px;width:269px;height:1px;background:#000"></div>
<div style="left:55px;top:692px;width:269px;height:1px;background:#000"></div>
<div style="left:55px;top:712px;width:269px;height:1px;background:#000"></div>
<div style="left:55px;top:732px;width:269px;height:1px;background:#000"></div>
<div style="left:55px;top:752px;width:269px;height:1px;background:#000"></div>
<div style="left:150px;top:253px;width:1px;height:500px;background:#000"></div>
<div style="left:242px;top:253px;width:1px;height:500px;background:#000"></div>
<div style="left:323px;top:253px;width:1px;height:500px;background:#000"></div>
<div class="t" style="left:58.5px;top:257px;color:#000;font-size:13.3px">Месяц</div>
<div class="t" style="left:153px;top:257px;color:#000;font-size:13.3px">Продано</div>
<div class="t" style="left:245.5px;top:257px;color:#000;font-size:13.3px">Прибыль</div>
<div class="t" style="left:58.5px;top:277px;color:#000;font-size:13.3px">Январь</div>
<div class="t" style="left:150px;top:277px;width:90px;text-align:right;color:#000;font-size:13.3px">14</div>
<div class="t" style="left:242px;top:277px;width:79.5px;text-align:right;color:#000;font-size:13.3px">54234</div>
<div class="t" style="left:58.5px;top:297px;color:#000;font-size:13.3px">Февраль</div>
<div class="t" style="left:150px;top:297px;width:90px;text-align:right;color:#000;font-size:13.3px">17</div>
<div class="t" style="left:242px;top:297px;width:79.5px;text-align:right;color:#000;font-size:13.3px">76345</div>
<div class="t" style="left:58.5px;top:317px;color:#000;font-size:13.3px">Март</div>
<div class="t" style="left:150px;top:317px;width:90px;text-align:right;color:#000;font-size:13.3px">26</div>
<div class="t" style="left:242px;top:317px;width:79.5px;text-align:right;color:#000;font-size:13.3px">45234</div>
<div class="t" style="left:58.5px;top:337px;color:#000;font-size:13.3px">Апрель</div>
<div class="t" style="left:150px;top:337px;width:90px;text-align:right;color:#000;font-size:13.3px">78</div>
<div class="t" style="left:242px;top:337px;width:79.5px;text-align:right;color:#000;font-size:13.3px">178000</div>
<div class="t" style="left:58.5px;top:357px;color:#000;font-size:13.3px">Май</div>
<div class="t" style="left:150px;top:357px;width:90px;text-align:right;color:#000;font-size:13.3px">3</div>
<div class="t" style="left:242px;top:357px;width:79.5px;text-align:right;color:#000;font-size:13.3px">4523</div>
<div class="t" style="left:58.5px;top:377px;color:#000;font-size:13.3px">Июнь</div>
<div class="t" style="left:150px;top:377px;width:90px;text-align:right;color:#000;font-size:13.3px">15</div>
<div class="t" style="left:242px;top:377px;width:79.5px;text-align:right;color:#000;font-size:13.3px">53452</div>
<div class="t" style="left:58.5px;top:397px;color:#000;font-size:13.3px">Июль</div>
<div class="t" style="left:150px;top:397px;width:90px;text-align:right;color:#000;font-size:13.3px">43</div>
<div class="t" style="left:242px;top:397px;width:79.5px;text-align:right;color:#000;font-size:13.3px">78000</div>
<div class="t" style="left:58.5px;top:417px;color:#000;font-size:13.3px">Август</div>
<div class="t" style="left:150px;top:417px;width:90px;text-align:right;color:#000;font-size:13.3px">27</div>
<div class="t" style="left:242px;top:417px;width:79.5px;text-align:right;color:#000;font-size:13.3px">45234</div>
<div class="t" style="left:58.5px;top:437px;color:#000;font-size:13.3px">Сентябрь</div>
<div class="t" style="left:150px;top:437px;width:90px;text-align:right;color:#000;font-size:13.3px">28</div>
<div class="t" style="left:242px;top:437px;width:79.5px;text-align:right;color:#000;font-size:13.3px">97643</div>
<div class="t" style="left:58.5px;top:457px;color:#000;font-size:13.3px">Октябрь</div>
<div class="t" style="left:150px;top:457px;width:90px;text-align:right;color:#000;font-size:13.3px">31</div>
<div class="t" style="left:242px;top:457px;width:79.5px;text-align:right;color:#000;font-size:13.3px">4524</div>
<div class="t" style="left:58.5px;top:477px;color:#000;font-size:13.3px">Ноябрь</div>
<div class="t" style="left:150px;top:477px;width:90px;text-align:right;color:#000;font-size:13.3px">78</div>
<div class="t" style="left:242px;top:477px;width:79.5px;text-align:right;color:#000;font-size:13.3px">245908</div>
<div class="t" style="left:58.5px;top:497px;color:#000;font-size:13.3px">Декабрь</div>
<div class="t" style="left:150px;top:497px;width:90px;text-align:right;color:#000;font-size:13.3px">134</div>
<div class="t" style="left:242px;top:497px;width:79.5px;text-align:right;color:#000;font-size:13.3px">234524</div>
<div class="t" style="left:58.5px;top:517px;color:#000;font-size:13.3px">Январь</div>
<div class="t" style="left:150px;top:517px;width:90px;text-align:right;color:#000;font-size:13.3px">53</div>
<div class="t" style="left:242px;top:517px;width:79.5px;text-align:right;color:#000;font-size:13.3px">34534</div>
<div class="t" style="left:58.5px;top:537px;color:#000;font-size:13.3px">Февраль</div>
<div class="t" style="left:150px;top:537px;width:90px;text-align:right;color:#000;font-size:13.3px">54</div>
<div class="t" style="left:242px;top:537px;width:79.5px;text-align:right;color:#000;font-size:13.3px">76345</div>
<div class="t" style="left:58.5px;top:557px;color:#000;font-size:13.3px">Март</div>
<div class="t" style="left:150px;top:557px;width:90px;text-align:right;color:#000;font-size:13.3px">345</div>
<div class="t" style="left:242px;top:557px;width:79.5px;text-align:right;color:#000;font-size:13.3px">2653</div>
<div class="t" style="left:58.5px;top:577px;color:#000;font-size:13.3px">Апрель</div>
<div class="t" style="left:150px;top:577px;width:90px;text-align:right;color:#000;font-size:13.3px">34</div>
<div class="t" style="left:242px;top:577px;width:79.5px;text-align:right;color:#000;font-size:13.3px">178000</div>
<div class="t" style="left:58.5px;top:597px;color:#000;font-size:13.3px">Май</div>
<div class="t" style="left:150px;top:597px;width:90px;text-align:right;color:#000;font-size:13.3px">43</div>
<div class="t" style="left:242px;top:597px;width:79.5px;text-align:right;color:#000;font-size:13.3px">435</div>
<div class="t" style="left:58.5px;top:617px;color:#000;font-size:13.3px">Июнь</div>
<div class="t" style="left:150px;top:617px;width:90px;text-align:right;color:#000;font-size:13.3px">22</div>
<div class="t" style="left:242px;top:617px;width:79.5px;text-align:right;color:#000;font-size:13.3px">4234</div>
<div class="t" style="left:58.5px;top:637px;color:#000;font-size:13.3px">Июль</div>
<div class="t" style="left:150px;top:637px;width:90px;text-align:right;color:#000;font-size:13.3px">43</div>
<div class="t" style="left:242px;top:637px;width:79.5px;text-align:right;color:#000;font-size:13.3px">43543</div>
<div class="t" style="left:58.5px;top:657px;color:#000;font-size:13.3px">Август</div>
<div class="t" style="left:150px;top:657px;width:90px;text-align:right;color:#000;font-size:13.3px">5363</div>
<div class="t" style="left:242px;top:657px;width:79.5px;text-align:right;color:#000;font-size:13.3px">45234</div>
<div class="t" style="left:58.5px;top:677px;color:#000;font-size:13.3px">Сентябрь</div>
<div class="t" style="left:150px;top:677px;width:90px;text-align:right;color:#000;font-size:13.3px">324</div>
<div class="t" style="left:242px;top:677px;width:79.5px;text-align:right;color:#000;font-size:13.3px">543534</div>
<div class="t" style="left:58.5px;top:697px;color:#000;font-size:13.3px">Октябрь</div>
<div class="t" style="left:150px;top:697px;width:90px;text-align:right;color:#000;font-size:13.3px">31</div>
<div class="t" style="left:242px;top:697px;width:79.5px;text-align:right;color:#000;font-size:13.3px">4524</div>
<div class="t" style="left:58.5px;top:717px;color:#000;font-size:13.3px">Ноябрь</div>
<div class="t" style="left:150px;top:717px;width:90px;text-align:right;color:#000;font-size:13.3px">78</div>
<div class="t" style="left:242px;top:717px;width:79.5px;text-align:right;color:#000;font-size:13.3px">531908</div>
<div class="t" style="left:58.5px;top:737px;color:#000;font-size:13.3px">Декабрь</div>
<div class="t" style="left:150px;top:737px;width:90px;text-align:right;color:#000;font-size:13.3px">134</div>
<div class="t" style="left:242px;top:737px;width:79.5px;text-align:right;color:#000;font-size:13.3px">234524</div>
<div class="t" style="left:387px;top:257px;width:155.5px;text-align:right;color:#000;font-size:13.3px">543534</div>
<div style="left:149px;top:271px;width:176px;height:2px;background:#2a6ac8"></div>
<div style="left:149px;top:611px;width:176px;height:2px;background:#2a6ac8"></div>
<div style="left:149px;top:271px;width:2px;height:342px;background:#2a6ac8"></div>
<div style="left:322px;top:271px;width:2px;height:342px;background:#2a6ac8"></div>
<div style="left:147px;top:269px;width:7px;height:7px;background:#fff"></div>
<div style="left:148px;top:270px;width:5px;height:5px;background:#2a6ac8"></div>
<div style="left:320px;top:269px;width:7px;height:7px;background:#fff"></div>
<div style="left:321px;top:270px;width:5px;height:5px;background:#2a6ac8"></div>
<div style="left:147px;top:609px;width:7px;height:7px;background:#fff"></div>
<div style="left:148px;top:610px;width:5px;height:5px;background:#2a6ac8"></div>
<div style="left:320px;top:609px;width:7px;height:7px;background:#fff"></div>
<div style="left:321px;top:610px;width:5px;height:5px;background:#2a6ac8"></div>
<div style="left:895px;top:233px;width:1px;height:527px;background:#a3a3a3"></div>
<div style="left:32px;top:759px;width:864px;height:1px;background:#ababab"></div>
<div style="left:896px;top:233px;width:20px;height:527px;background:#e6e6e6"></div>
<div style="left:899px;top:235px;width:15px;height:526px;background:#dcdcdc;border:1px solid #ababab"></div>
<div style="left:899px;top:235px;width:15px;height:15px;background:#fff;border:1px solid #ababab"></div>
<svg style="left:902px;top:240px" width="9" height="5" viewBox="0 0 9 5"><path d="M0 5h9L4.5 0z" fill="#777"/></svg>
<div style="left:899px;top:250px;width:15px;height:476px;background:#fff;border:1px solid #ababab"></div>
<div style="left:899px;top:746px;width:15px;height:15px;background:#fff;border:1px solid #ababab"></div>
<svg style="left:902px;top:752px" width="9" height="5" viewBox="0 0 9 5"><path d="M0 0h9L4.5 5z" fill="#777"/></svg>
<svg style="left:0;top:0" width="948" height="841" viewBox="0 0 948 841">
<rect x="375.5" y="307.25" width="478.80" height="287.05" fill="#fff" stroke="#8c8c8c" stroke-width="1.5"/>
<path d="M424.2 531.50H823.6" stroke="#d9d9d9" stroke-width="1"/>
<text x="412.5" y="535.40" text-anchor="end" font-family="Liberation Sans" font-size="10.8" fill="#595959">0</text>
<path d="M424.2 502.50H823.6" stroke="#d9d9d9" stroke-width="1"/>
<text x="412.5" y="505.90" text-anchor="end" font-family="Liberation Sans" font-size="10.8" fill="#595959">50000</text>
<path d="M424.2 472.50H823.6" stroke="#d9d9d9" stroke-width="1"/>
<text x="412.5" y="476.40" text-anchor="end" font-family="Liberation Sans" font-size="10.8" fill="#595959">100000</text>
<path d="M424.2 443.50H823.6" stroke="#d9d9d9" stroke-width="1"/>
<text x="412.5" y="446.90" text-anchor="end" font-family="Liberation Sans" font-size="10.8" fill="#595959">150000</text>
<path d="M424.2 413.50H823.6" stroke="#d9d9d9" stroke-width="1"/>
<text x="412.5" y="417.40" text-anchor="end" font-family="Liberation Sans" font-size="10.8" fill="#595959">200000</text>
<path d="M424.2 384.50H823.6" stroke="#d9d9d9" stroke-width="1"/>
<text x="412.5" y="387.90" text-anchor="end" font-family="Liberation Sans" font-size="10.8" fill="#595959">250000</text>
<path d="M424.2 354.50H823.6" stroke="#d9d9d9" stroke-width="1"/>
<text x="412.5" y="358.40" text-anchor="end" font-family="Liberation Sans" font-size="10.8" fill="#595959">300000</text>
<text x="834" y="535.40" font-family="Liberation Sans" font-size="10.8" fill="#595959">0</text>
<text x="834" y="513.27" font-family="Liberation Sans" font-size="10.8" fill="#595959">50</text>
<text x="834" y="491.15" font-family="Liberation Sans" font-size="10.8" fill="#595959">100</text>
<text x="834" y="469.02" font-family="Liberation Sans" font-size="10.8" fill="#595959">150</text>
<text x="834" y="446.90" font-family="Liberation Sans" font-size="10.8" fill="#595959">200</text>
<text x="834" y="424.77" font-family="Liberation Sans" font-size="10.8" fill="#595959">250</text>
<text x="834" y="402.65" font-family="Liberation Sans" font-size="10.8" fill="#595959">300</text>
<text x="834" y="380.52" font-family="Liberation Sans" font-size="10.8" fill="#595959">350</text>
<text x="834" y="358.40" font-family="Liberation Sans" font-size="10.8" fill="#595959">400</text>
<text x="435.95" y="550.3" text-anchor="middle" font-family="Liberation Sans" font-size="10.8" fill="#595959">1</text>
<text x="459.44" y="550.3" text-anchor="middle" font-family="Liberation Sans" font-size="10.8" fill="#595959">2</text>
<text x="482.94" y="550.3" text-anchor="middle" font-family="Liberation Sans" font-size="10.8" fill="#595959">3</text>
<text x="506.43" y="550.3" text-anchor="middle" font-family="Liberation Sans" font-size="10.8" fill="#595959">4</text>
<text x="529.92" y="550.3" text-anchor="middle" font-family="Liberation Sans" font-size="10.8" fill="#595959">5</text>
<text x="553.42" y="550.3" text-anchor="middle" font-family="Liberation Sans" font-size="10.8" fill="#595959">6</text>
<text x="576.91" y="550.3" text-anchor="middle" font-family="Liberation Sans" font-size="10.8" fill="#595959">7</text>
<text x="600.41" y="550.3" text-anchor="middle" font-family="Liberation Sans" font-size="10.8" fill="#595959">8</text>
<text x="623.90" y="550.3" text-anchor="middle" font-family="Liberation Sans" font-size="10.8" fill="#595959">9</text>
<text x="647.39" y="550.3" text-anchor="middle" font-family="Liberation Sans" font-size="10.8" fill="#595959">10</text>
<text x="670.89" y="550.3" text-anchor="middle" font-family="Liberation Sans" font-size="10.8" fill="#595959">11</text>
<text x="694.38" y="550.3" text-anchor="middle" font-family="Liberation Sans" font-size="10.8" fill="#595959">12</text>
<text x="717.88" y="550.3" text-anchor="middle" font-family="Liberation Sans" font-size="10.8" fill="#595959">13</text>
<text x="741.37" y="550.3" text-anchor="middle" font-family="Liberation Sans" font-size="10.8" fill="#595959">14</text>
<text x="764.86" y="550.3" text-anchor="middle" font-family="Liberation Sans" font-size="10.8" fill="#595959">15</text>
<text x="788.36" y="550.3" text-anchor="middle" font-family="Liberation Sans" font-size="10.8" fill="#595959">16</text>
<text x="811.85" y="550.3" text-anchor="middle" font-family="Liberation Sans" font-size="10.8" fill="#595959">17</text>
<polyline points="435.95,499.50 459.44,486.46 482.94,504.81 506.43,426.48 529.92,528.83 553.42,499.96 576.91,485.48 600.41,504.81 623.90,473.89 647.39,528.83 670.89,386.41 694.38,393.13 717.88,511.12 741.37,486.46 764.86,529.93 788.36,426.48 811.85,531.24" fill="none" stroke="#ed7d31" stroke-width="2.8" stroke-linejoin="round" stroke-linecap="round"/>
<polyline points="435.95,525.30 459.44,523.98 482.94,520.00 506.43,496.99 529.92,530.17 553.42,524.86 576.91,512.47 600.41,519.55 623.90,519.11 647.39,517.78 670.89,496.99 694.38,472.20 717.88,508.05 741.37,507.61 764.86,378.84 788.36,516.46 811.85,512.47" fill="none" stroke="#4472c4" stroke-width="2.8" stroke-linejoin="round" stroke-linecap="round"/>
<text x="614.9" y="335.3" text-anchor="middle" font-family="Liberation Sans" font-size="17" fill="#595959">Название диаграммы</text>
<path d="M557.5 575H584.2" stroke="#ed7d31" stroke-width="2.8" stroke-linecap="round"/>
<text x="586" y="578.9" font-family="Liberation Sans" font-size="10.8" fill="#595959">Ряд2</text>
<path d="M621.5 575H649" stroke="#4472c4" stroke-width="2.8" stroke-linecap="round"/>
<text x="650.7" y="578.9" font-family="Liberation Sans" font-size="10.8" fill="#595959">Ряд1</text>
<circle cx="375.50" cy="307.25" r="4.6" fill="#fff" stroke="#8c8c8c" stroke-width="1.6"/>
<circle cx="614.90" cy="307.25" r="4.6" fill="#fff" stroke="#8c8c8c" stroke-width="1.6"/>
<circle cx="854.30" cy="307.25" r="4.6" fill="#fff" stroke="#8c8c8c" stroke-width="1.6"/>
<circle cx="375.50" cy="450.77" r="4.6" fill="#fff" stroke="#8c8c8c" stroke-width="1.6"/>
<circle cx="854.30" cy="450.77" r="4.6" fill="#fff" stroke="#8c8c8c" stroke-width="1.6"/>
<circle cx="375.50" cy="594.30" r="4.6" fill="#fff" stroke="#8c8c8c" stroke-width="1.6"/>
<circle cx="614.90" cy="594.30" r="4.6" fill="#fff" stroke="#8c8c8c" stroke-width="1.6"/>
<circle cx="854.30" cy="594.30" r="4.6" fill="#fff" stroke="#8c8c8c" stroke-width="1.6"/>
</svg>
<div style="left:32px;top:760px;width:864px;height:28px;background:#e6e6e6"></div>
<div style="left:32px;top:760px;width:864px;height:1px;background:#c6c6c6"></div>
<svg style="left:56px;top:770px" width="5" height="8" viewBox="0 0 5 8"><path d="M5 0V8L0 4z" fill="#bdbdbd"/></svg>
<svg style="left:86px;top:770px" width="5" height="8" viewBox="0 0 5 8"><path d="M0 0V8L5 4z" fill="#bdbdbd"/></svg>
<div style="left:130px;top:760px;width:60px;height:25px;background:#fff;border-left:1px solid #c6c6c6;border-right:1px solid #c6c6c6"></div>
<div style="left:131px;top:783px;width:58px;height:2px;background:#217346"></div>
<div class="t" style="left:142.20px;top:766.86px;font-size:13.37px;font-weight:bold;transform:scaleX(0.910);transform-origin:0 0;color:#217346">Лист1</div>
<svg style="left:222px;top:765px" width="18" height="18" viewBox="0 0 18 18">
<circle cx="9" cy="9" r="7.6" fill="none" stroke="#808080" stroke-width="1.2"/>
<path d="M9 4.8v8.4M4.8 9h8.4" stroke="#707070" stroke-width="1.4"/></svg>
<div style="left:562px;top:770px;width:2px;height:2px;background:#b0b0b0"></div>
<div style="left:562px;top:774px;width:2px;height:2px;background:#b0b0b0"></div>
<div style="left:562px;top:778px;width:2px;height:2px;background:#b0b0b0"></div>
<div style="left:579px;top:767px;width:317px;height:15px;background:#dcdcdc;border:1px solid #ababab"></div>
<div style="left:579px;top:767px;width:15px;height:15px;background:#fff;border:1px solid #ababab"></div>
<svg style="left:584px;top:771px" width="4" height="7" viewBox="0 0 4 7"><path d="M4 0V7L0 3.5z" fill="#555"/></svg>
<div style="left:593px;top:767px;width:240px;height:15px;background:#fff;border:1px solid #ababab"></div>
<div style="left:881px;top:767px;width:15px;height:15px;background:#fff;border:1px solid #ababab"></div>
<svg style="left:887px;top:771px" width="4" height="7" viewBox="0 0 4 7"><path d="M0 0V7L4 3.5z" fill="#555"/></svg>
<div style="left:32px;top:788px;width:884px;height:21px;background:#f3f3f3"></div>
<div style="left:32px;top:788px;width:884px;height:1px;background:#d6d6d6"></div>
<div class="t" style="left:38.50px;top:794.40px;font-size:10.61px;font-weight:normal;transform:scaleX(1.114);transform-origin:0 0;color:#444">Готово</div>
<svg style="left:98px;top:789px" width="22" height="19" viewBox="0 0 22 19">
<path d="M6 8h10v7H6z" fill="#fff"/>
<circle cx="6.8" cy="5.9" r="2.8" fill="#555"/>
<path d="M5.6 10V15.4H16.4V5" fill="none" stroke="#555" stroke-width="1.3"/>
<rect x="11.2" y="4.2" width="5.8" height="2.6" fill="#555"/>
<path d="M10.2 9.5h1.6M13.2 9.5h1.6M7.2 11.5h1.6M10.2 11.5h1.6M13.2 11.5h1.6M7.2 13.5h1.6M10.2 13.5h1.6M13.2 13.5h1.6" stroke="#555" stroke-width="1"/>
</svg>
<div style="left:603px;top:789px;width:40px;height:20px;background:#c6c6c6"></div>
<svg style="left:616px;top:792px" width="13" height="13" viewBox="0 0 13 13">
<path d="M0.5 0.5h12v12h-12zM0.5 4.5h12M0.5 8.5h12M4.5 0.5v12M8.5 0.5v12" fill="none" stroke="#555" stroke-width="1"/></svg>
<svg style="left:656px;top:792px" width="14" height="13" viewBox="0 0 14 13">
<path d="M0.5 0.5h13v12h-13z" fill="none" stroke="#555" stroke-width="1"/>
<path d="M2.5 2.5h9v8h-9z" fill="none" stroke="#555" stroke-width="1"/>
<path d="M4 4.5h6M4 6.5h6M4 8.5h6" stroke="#555" stroke-width="1"/></svg>
<svg style="left:696px;top:792px" width="14" height="13" viewBox="0 0 14 13">
<path d="M0.5 0.5h13v12h-13z" fill="none" stroke="#555" stroke-width="1"/>
<path d="M4.5 0.5v7M8.5 0.5v7M0.5 7.5h8" fill="none" stroke="#555" stroke-width="1"/></svg>
<div style="left:729px;top:798px;width:8px;height:1.3px;background:#555"></div>
<div style="left:742px;top:799px;width:100px;height:1px;background:#a6a6a6"></div>
<div style="left:790px;top:794px;width:5px;height:11px;background:#666"></div>
<div style="left:847px;top:797.5px;width:8px;height:1.3px;background:#555"></div>
<div style="left:850.3px;top:794px;width:1.3px;height:8px;background:#555"></div>
<div class="t" style="left:868.70px;top:793.71px;font-size:11.19px;font-weight:normal;transform:scaleX(0.939);transform-origin:0 0;color:#444">100 %</div>
<div style="left:559.5px;top:61.5px;width:92px;height:36px;border:4px solid #ee0008;border-radius:10px;box-shadow:0 3px 6px rgba(0,0,0,.5), inset 0 3px 5px rgba(0,0,0,.3)"></div>
</body></html>
